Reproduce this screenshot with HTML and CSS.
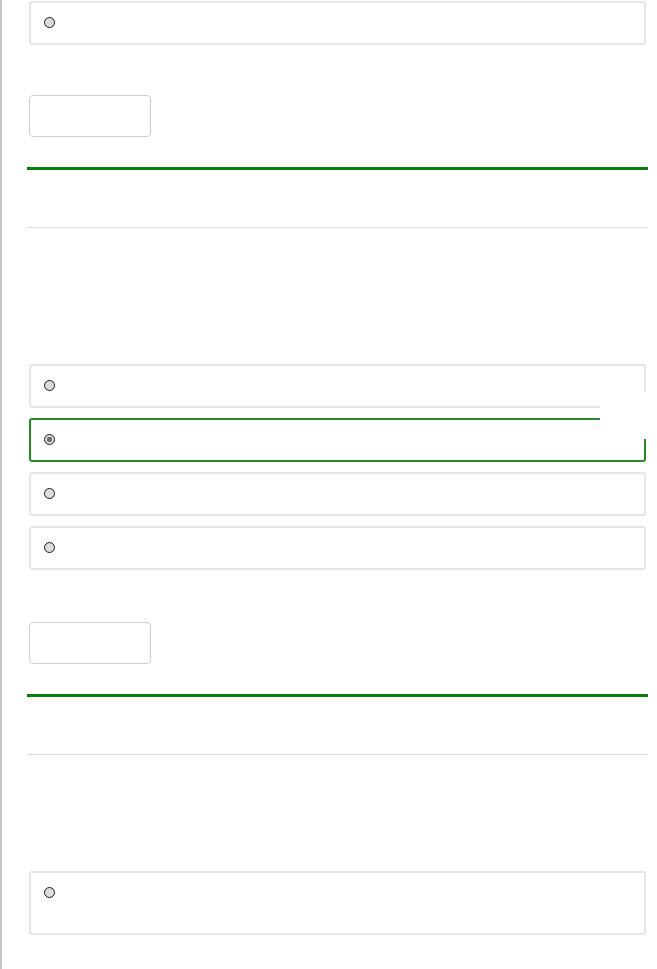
FILE: index.html
```html
<!DOCTYPE html>
<html>
<head>
    <meta charset="utf-8">
    <meta name="viewport" content="width=device-width, initial-scale=1">
    <title>Quiz</title>
    <link rel="stylesheet" href="styles.css">
</head>

<body>
    <div class="page">

        <div class="question q-first">
            <div class="choices">
                <label class="choice"><span class="radio"></span></label>
            </div>
            <button class="check-btn"></button>
        </div>

        <hr class="divider">
        <hr class="rule">

        <div class="question q-second">
            <div class="choices">
                <label class="choice"><span class="radio"></span></label>
                <label class="choice selected"><span class="radio checked"></span></label>
                <label class="choice"><span class="radio"></span></label>
                <label class="choice"><span class="radio"></span></label>
                <div class="mask"></div>
            </div>
            <button class="check-btn"></button>
        </div>

        <hr class="divider">
        <hr class="rule">

        <div class="question q-third">
            <div class="choices">
                <label class="choice tall"><span class="radio"></span></label>
            </div>
        </div>

    </div>
</body>
</html>
```

FILE: styles.css
```css
body, html {
    margin: 0;
    padding: 0;
    background: #fff;
    font-family: "Liberation Sans", Arial, sans-serif;}

.page {
    border-left: 2px solid #c4c4c4;
    padding: 1px 9px 0 25px;
    min-height: 968px;}

.choices {
    position: relative;}

.choice {
    display: flex;
    align-items: flex-start;
    box-sizing: border-box;
    height: 44px;
    margin: 0 2px 10px 2px;
    padding: 14px 13px;
    border: 2px solid #e6e6e6;
    border-radius: 3px;}

.choice.selected {
    border-color: #2a8a2a;}

.choice.tall {
    height: 64px;}

.radio {
    display: block;
    box-sizing: border-box;
    width: 11px;
    height: 11px;
    border: 1px solid #1a1a1a;
    border-radius: 50%;
    background: #dcdcdc;}

.radio.checked {
    background: radial-gradient(circle, #707070 0 2.5px, #dcdcdc 3px);}

/* white patch over the right end of the 1st/2nd option */
.mask {
    position: absolute;
    left: 573px;
    top: 28px;
    width: 50px;
    height: 47px;
    background: #fff;}

.check-btn {
    display: block;
    width: 122px;
    height: 42px;
    margin: 50px 0 0 2px;
    border: 1px solid #cfcfcf;
    border-radius: 4px;
    background: #fff;}

.q-second .check-btn {
    margin-top: 52px;}

.divider {
    margin: 30px 0 0 0;
    border: none;
    height: 3px;
    background: #0a7d0a;}

.rule {
    margin: 57px 0 0 0;
    border: none;
    height: 1px;
    background: #e0e0e0;}

.q-second {
    margin-top: 136px;}

.q-third {
    margin-top: 116px;}
```
